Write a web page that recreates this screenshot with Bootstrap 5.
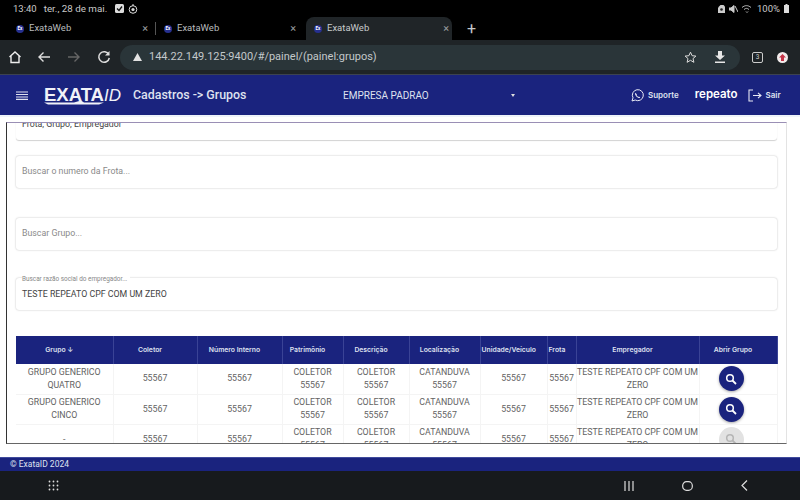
<!DOCTYPE html>
<html lang="pt-BR">
<head>
<meta charset="utf-8">
<title>ExataWeb</title>
<link href="https://cdn.jsdelivr.net/npm/bootstrap@5.3.0/dist/css/bootstrap.min.css" rel="stylesheet">
<style>
html,body{width:800px;height:500px;overflow:hidden;margin:0;background:#fff;font-family:Roboto,"Liberation Sans",sans-serif}
.shell{width:800px;height:500px}
.statusbar{height:17px;background:#000;color:#c9c9c9;font-size:9.5px;padding:0 11px 0 13px;line-height:1}
.statusbar .dt{margin-left:7px;font-size:9.8px}
.tabstrip{height:23px;background:#000;color:#b9bcbe;font-size:9.5px}
.tabx{height:23px;width:148px;padding:0 0 0 16px;position:relative}
.tabx.act{background:#202528;border-radius:8px 8px 0 0;color:#c8cbcc;width:146px;margin-left:10px;padding:0 3px 0 8px}
.tabx .sep{position:absolute;right:-8px;top:5px;height:13px;width:1px;background:#555}
.fav{width:8px;height:8px;border-radius:50%;background:#26308f;color:#fff;font-size:4.5px;line-height:8px;text-align:center;margin-right:5px;font-weight:700}
.clo{margin-left:auto;font-size:11px;color:#9a9d9f;line-height:1}
.plus{font-size:16px;color:#c5c8ca;margin-left:15px;line-height:1}
.toolb{height:35px;background:#1f2427;padding:0 0 0 7px;border-bottom:1px solid #3c4250}
.omni{width:620px;height:25px;border-radius:13px;background:#2a3539;color:#c3c8ca;font-size:11px;padding:0 7px 0 13px;margin-left:8px}
.omni .url{margin-left:7px}
.tbtn{width:16px;height:16px}
.tbtn.g1{margin-left:13px}
.tbtn.g2{margin-left:14px}
.tabcount{width:11px;height:11px;border:1px solid #ccc;border-radius:2px;font-size:6.5px;line-height:9px;text-align:center;color:#ccc;margin-left:12px}
.avat{width:11px;height:11px;border-radius:50%;background:#f2ecec;margin-left:14px;margin-right:10px}
.bluebar{height:40px;background:#1a237e;color:#e8e9f4;padding-left:16px}
.logo{font-family:"Liberation Sans",sans-serif;font-weight:700;font-size:18.5px;line-height:18px;margin-left:16px;width:89px;position:relative;letter-spacing:0;color:#f1f2f8}
.logo i{font-weight:400;font-size:17px;letter-spacing:0}
.logo svg{position:absolute;left:0;top:14px}
.pagetitle{font-size:12.4px;font-weight:500;width:210px;color:#dfe1ef;white-space:nowrap}
.empresa{font-size:10px;width:168px;color:#dfe1ef}
.careted{width:0;height:0;border-left:2.5px solid transparent;border-right:2.5px solid transparent;border-top:3px solid #ddd;margin-right:116px}
.sup{font-family:Inter,Roboto,sans-serif;font-size:8px;font-weight:600;color:#dfe1ef}
.repe{font-family:Inter,Roboto,sans-serif;font-size:11.5px;font-weight:600;color:#fff;margin-left:16px;margin-right:10px}
.mainarea{height:342px;background:#fff;padding:5px 13px 13px 6px;border-top:2px solid #eef3fa}
.framebox{height:322px;overflow:hidden;border-top:1px solid #9a8fb5;border-left:1px solid #333;border-bottom:1px solid #666;border-right:1px solid #e3e3e3;padding:0 9px}
.scrollin{margin-top:-7px;color:#555;font-size:8.8px}
.fld{border-radius:3px;box-shadow:0 0 2px rgba(0,0,0,.28);height:32px;padding-left:6px;color:#8a8a8a;background:#fff;position:relative}
.fld.first{height:24px;color:#444;padding-top:3px;line-height:11px;margin-bottom:16px;border-radius:0 0 3px 3px;box-shadow:0 1px 1px rgba(0,0,0,.18)}
.fld.gap2{margin-bottom:30px}
.fld.gap3{margin-bottom:28px}
.fld.last{color:#444;margin-bottom:26px;padding-top:10px}
.fld .mini{position:absolute;left:6px;top:-3px;font-size:6.4px;color:#888;background:#fff;padding-right:3px;line-height:8px}
.datat{width:761px;table-layout:fixed;margin:0;border-collapse:collapse}
.datat th{background:#1a237e;color:#dfe1ef;font-family:Inter,Roboto,sans-serif;font-size:6.8px;font-weight:600;height:28px;padding:0 10px 0 0;text-align:center;vertical-align:middle;border:0;border-right:1px solid #3a4396}
.datat th.hleft{padding:0 0 0 1px;text-align:left}
.datat td{height:30px;padding:0;text-align:center;vertical-align:middle;font-size:8.8px;line-height:12.6px;color:#636363;border:0;border-bottom:1px solid #f4f4f4;border-right:1px solid #f4f4f4}
.c1{width:97px}.c2{width:84px}.c3{width:85px}.c4{width:61px}.c5{width:66px}.c6{width:71px}.c7{width:67px}.c8{width:29px}.c9{width:123px}.c10{width:78px}
.round{width:25px;height:25px;border-radius:50%;background:#1a237e;box-shadow:0 1px 3px rgba(0,0,0,.35);margin-left:19px}
.round.off{background:#e2e2e2;box-shadow:none}
.footbar{height:14px;background:#1a237e;border-top:1px solid #3f4a9c;color:#dfe1ef;font-size:8.5px;padding-left:10px;line-height:12px}
.sysnav{height:29px;background:#171a1d;color:#ddd;position:relative}
.syssp1{margin-left:48px}
.sysright{margin-left:auto;margin-right:52px;gap:48px}
</style>
</head>
<body>
<div class="shell d-flex flex-column">
  <div class="statusbar d-flex align-items-center">
    <span>13:40</span><span class="dt">ter., 28 de mai.</span>
    <svg class="ms-2" width="9" height="9" viewBox="0 0 9 9"><rect width="9" height="9" rx="1.5" fill="#ddd"/><path d="M2 4.500l2 2 3-4" stroke="#111" stroke-width="1.300" fill="none"/></svg>
    <svg class="ms-1" width="10" height="10" viewBox="0 0 10 10"><circle cx="5" cy="5.500" r="3.800" stroke="#ddd" fill="none"/><circle cx="5" cy="5.500" r="1.600" fill="#ddd"/><path d="M5 0v2" stroke="#ddd"/></svg>
    <span class="ms-auto d-flex align-items-center gap-1">
      <svg width="7" height="8" viewBox="0 0 7 8"><path d="M1 1.500L2.500 0h3L7 1.500V8H0V3z" fill="#ccc"/><circle cx="3.500" cy="4.500" r="1.300" fill="#222"/></svg>
      <svg width="9" height="8" viewBox="0 0 9 8"><path d="M0 3h2l3-2.500v7L2 5H0zM6 1l3 6" stroke="#ccc" fill="#ccc"/></svg>
      <svg width="11" height="8" viewBox="0 0 11 8"><path d="M0 2.500C3 0 6 0 9 2.500M2 4.500c2-1.500 3-1.500 5 0M4 6.500l1 1 1-1" stroke="#bbb" fill="none"/></svg>
      <span>100%</span>
      <svg width="5" height="9" viewBox="0 0 5 9"><path d="M1.500 0h2v1H5v8H0V1h1.500z" fill="#ddd"/></svg>
    </span>
  </div>
  <div class="tabstrip d-flex align-items-center">
    <div class="tabx d-flex align-items-center"><span class="fav">Ex</span>ExataWeb<span class="clo">×</span><span class="sep"></span></div>
    <div class="tabx d-flex align-items-center"><span class="fav">Ex</span>ExataWeb<span class="clo">×</span></div>
    <div class="tabx act d-flex align-items-center"><span class="fav">Ex</span>ExataWeb<span class="clo">×</span></div>
    <span class="plus">+</span>
  </div>
  <div class="toolb d-flex align-items-center">
    <svg class="tbtn" viewBox="0 0 16 16"><path d="M2.500 8L8 3l5.500 5M4 7v6.500h8V7" stroke="#eee" stroke-width="1.400" fill="none"/></svg>
    <svg class="tbtn g1" viewBox="0 0 16 16"><path d="M14 8H3M7.500 3.500L3 8l4.500 4.500" stroke="#ddd" stroke-width="1.400" fill="none"/></svg>
    <svg class="tbtn g2" viewBox="0 0 16 16"><path d="M2 8h11M8.500 3.500L13 8l-4.500 4.500" stroke="#666" stroke-width="1.400" fill="none"/></svg>
    <svg class="tbtn g2" viewBox="0 0 16 16"><path d="M12.800 5.500A5.300 5.300 0 1 0 13.300 9" stroke="#ddd" stroke-width="1.500" fill="none"/><path d="M13.500 2v4.500H9z" fill="#ddd"/></svg>
    <div class="omni d-flex align-items-center">
      <svg width="9" height="8" viewBox="0 0 9 8"><path d="M4.500 0L9 8H0z" fill="#e2e2e2"/></svg>
      <span class="url">144.22.149.125:9400/#/painel/(painel:grupos)</span>
      <svg class="ms-auto" width="13" height="13" viewBox="0 0 13 13"><path d="M6.500 1.200l1.600 3.500 3.800.4-2.900 2.500.9 3.700-3.400-2-3.400 2 .9-3.700L1.100 5.100l3.800-.4z" stroke="#ddd" fill="none"/></svg>
      <svg style="margin-left:17px;margin-right:7px" width="12" height="12" viewBox="0 0 12 12"><path d="M4 0h4v4.500h3L6 9 1 4.500h3zM1 10.500h10V12H1z" fill="#e6e6e6"/></svg>
    </div>
    <div class="tabcount">3</div>
    <div class="avat d-flex align-items-center justify-content-center"><svg width="7" height="7" viewBox="0 0 7 7"><path d="M3.500 0L7 3.500H5V7H2V3.500H0z" fill="#c33347"/></svg></div>
  </div>
  <div class="bluebar d-flex align-items-center">
    <svg width="12" height="9" viewBox="0 0 12 9"><path d="M0 1h12M0 3.500h12M0 6h12M0 8.300h12" stroke="#e0e2ef" stroke-width="1.200"/></svg>
    <div class="logo">EXATA<i>ID</i><svg width="62" height="5" viewBox="0 0 62 5"><path d="M0 2.500h30L37 0.500l3 2h20l-5 2H4z" fill="#f1f2f8"/></svg></div>
    <span class="pagetitle">Cadastros -&gt; Grupos</span>
    <span class="empresa">EMPRESA PADRAO</span>
    <span class="careted"></span>
    <svg width="13" height="13" viewBox="0 0 13 13"><path d="M1 12l1-3.200A5.500 5.500 0 1 1 4.200 11z" stroke="#e8e9f4" fill="none"/><path d="M4.300 3.800c-.8 1 .2 3 1.300 3.900 1.200 1 3 1.800 3.600.7l-1.300-1-.6.500c-.8-.3-1.500-1-1.800-1.800l.5-.6z" fill="#e8e9f4"/></svg>
    <span class="sup ms-1">Suporte</span>
    <span class="repe">repeato</span>
    <svg width="14" height="13" viewBox="0 0 14 13"><path d="M5 1H1v11h4M5 6.500h8M10 3.800l3 2.700-3 2.700" stroke="#e8e9f4" stroke-width="1.100" fill="none"/></svg>
    <span class="sup ms-1">Sair</span>
  </div>
  <div class="mainarea">
    <div class="framebox">
      <div class="scrollin">
        <div class="fld first">Frota, Grupo, Empregador</div>
        <div class="fld gap2 d-flex align-items-center">Buscar o numero da Frota...</div>
        <div class="fld gap3 d-flex align-items-center">Buscar Grupo...</div>
        <div class="fld last"><span class="mini">Buscar razão social do empregador...</span>TESTE REPEATO CPF COM UM ZERO</div>
        <table class="table datat">
          <colgroup><col class="c1"><col class="c2"><col class="c3"><col class="c4"><col class="c5"><col class="c6"><col class="c7"><col class="c8"><col class="c9"><col class="c10"></colgroup>
          <thead><tr><th>Grupo ↓</th><th>Coletor</th><th>Número Interno</th><th>Patrimônio</th><th>Descrição</th><th>Localização</th><th class="hleft">Unidade/Veículo</th><th class="hleft">Frota</th><th>Empregador</th><th>Abrir Grupo</th></tr></thead>
          <tbody>
            <tr><td>GRUPO GENERICO QUATRO</td><td>55567</td><td>55567</td><td>COLETOR 55567</td><td>COLETOR 55567</td><td>CATANDUVA 55567</td><td>55567</td><td>55567</td><td>TESTE REPEATO CPF COM UM ZERO</td><td><div class="round d-flex align-items-center justify-content-center"><svg width="12" height="12" viewBox="0 0 12 12"><circle cx="5" cy="5" r="3.300" stroke="#fff" stroke-width="1.500" fill="none"/><path d="M7.500 7.500L11 11" stroke="#fff" stroke-width="1.800"/></svg></div></td></tr>
            <tr><td>GRUPO GENERICO CINCO</td><td>55567</td><td>55567</td><td>COLETOR 55567</td><td>COLETOR 55567</td><td>CATANDUVA 55567</td><td>55567</td><td>55567</td><td>TESTE REPEATO CPF COM UM ZERO</td><td><div class="round d-flex align-items-center justify-content-center"><svg width="12" height="12" viewBox="0 0 12 12"><circle cx="5" cy="5" r="3.300" stroke="#fff" stroke-width="1.500" fill="none"/><path d="M7.500 7.500L11 11" stroke="#fff" stroke-width="1.800"/></svg></div></td></tr>
            <tr><td>-</td><td>55567</td><td>55567</td><td>COLETOR 55567</td><td>COLETOR 55567</td><td>CATANDUVA 55567</td><td>55567</td><td>55567</td><td>TESTE REPEATO CPF COM UM ZERO</td><td><div class="round off d-flex align-items-center justify-content-center"><svg width="12" height="12" viewBox="0 0 12 12"><circle cx="5" cy="5" r="3.300" stroke="#b5b5b5" stroke-width="1.500" fill="none"/><path d="M7.500 7.500L11 11" stroke="#b5b5b5" stroke-width="1.800"/></svg></div></td></tr>
          </tbody>
        </table>
      </div>
    </div>
  </div>
  <div class="footbar">© ExataID 2024</div>
  <div class="sysnav d-flex align-items-center">
    <svg class="syssp1" width="11" height="11" viewBox="0 0 11 11"><g fill="#ddd"><circle cx="1.500" cy="1.500" r=".9"/><circle cx="5.500" cy="1.500" r=".9"/><circle cx="9.500" cy="1.500" r=".9"/><circle cx="1.500" cy="5.500" r=".9"/><circle cx="5.500" cy="5.500" r=".9"/><circle cx="9.500" cy="5.500" r=".9"/><circle cx="1.500" cy="9.500" r=".9"/><circle cx="5.500" cy="9.500" r=".9"/><circle cx="9.500" cy="9.500" r=".9"/></g></svg>
    <div class="sysright d-flex align-items-center">
      <svg width="10" height="10" viewBox="0 0 10 10"><path d="M1 0v10M5 0v10M9 0v10" stroke="#ddd" stroke-width="1.200"/></svg>
      <svg width="11" height="10" viewBox="0 0 11 10"><rect x=".7" y=".7" width="9.600" height="8.600" rx="3.800" stroke="#ddd" stroke-width="1.200" fill="none"/></svg>
      <svg width="7" height="11" viewBox="0 0 7 11"><path d="M6 .5L1 5.500l5 5" stroke="#ddd" stroke-width="1.200" fill="none"/></svg>
    </div>
  </div>
</div>
</body>
</html>
